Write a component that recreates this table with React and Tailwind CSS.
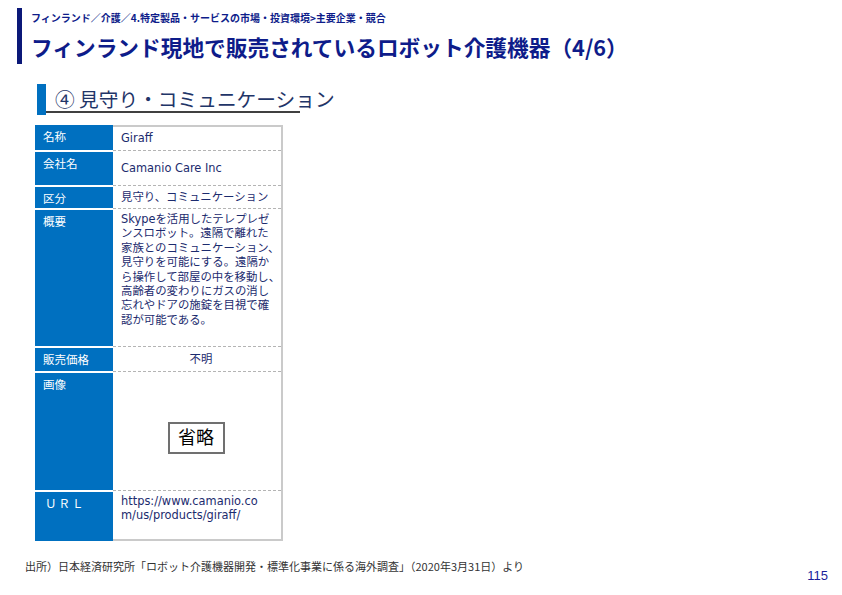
const font = { fontFamily: '"DejaVu Sans", "Noto Sans CJK JP", sans-serif' }

const rows = [
  { label: '名称', h: 'h-[25px]', value: 'Giraff', align: 'items-center' },
  { label: '会社名', h: 'h-[35px]', value: 'Camanio Care Inc', align: 'items-center' },
  { label: '区分', h: 'h-[23px]', value: '見守り、コミュニケーション', align: 'items-center' },
  {
    label: '概要',
    h: 'h-[138px]',
    lines: [
      'Skypeを活用したテレプレゼ',
      'ンスロボット。遠隔で離れた',
      '家族とのコミュニケーション、',
      '見守りを可能にする。遠隔か',
      'ら操作して部屋の中を移動し、',
      '高齢者の変わりにガスの消し',
      '忘れやドアの施錠を目視で確',
      '認が可能である。',
    ],
    align: 'items-start pt-[3px]',
  },
  { label: '販売価格', h: 'h-[25px]', value: '不明', align: 'items-center justify-center' },
  { label: '画像', h: 'h-[119px]', image: true },
  { label: 'ＵＲＬ', h: 'h-[51px]', lines: ['https://www.camanio.co', 'm/us/products/giraff/'], align: 'items-start pt-[3px]' },
]

export default function App() {
  return (
    <div
      className="relative w-[842px] h-[595px] bg-white overflow-hidden"
      style={{ fontFamily: '"Noto Sans CJK JP", "Noto Sans", sans-serif' }}
    >
      {/* Header */}
      <div className="flex pt-[8px] pl-[17px] gap-[9px]">
        <div className="w-[5px] h-[56px] bg-[#0b1878]" />
        <div>
          <p className="mt-[3px] text-[10px] leading-[14px] font-bold text-[#0e1c8a] whitespace-nowrap">
            フィンランド／介護／4.特定製品・サービスの市場・投資環境&gt;主要企業・競合
          </p>
          <h1 className="mt-[9px] text-[21.7px] leading-[26px] font-bold text-[#0e1c8a] whitespace-nowrap">
            フィンランド現地で販売されているロボット介護機器（4/6）
          </h1>
        </div>
      </div>

      {/* Section heading */}
      <div className="flex mt-[20px] ml-[37px]">
        <div className="w-[9px] h-[31px] bg-[#0070c0]" />
        <div className="w-[254px] h-[29px] border-b-2 border-[#404040] pl-[9px]">
          <span className="text-[19.7px] leading-[29px] text-[#1f3568] whitespace-nowrap">④ 見守り・コミュニケーション</span>
        </div>
      </div>

      {/* Table */}
      <div className="mt-[10px] ml-[35px] w-[248px]">
        {rows.map((row, i) => (
          <div key={row.label} className={`flex ${row.h}`}>
            <div
              className={`w-[78px] shrink-0 bg-[#0070c0] text-white text-[11.5px] leading-[14px] pl-[8px] pt-[4px] ${
                i > 0 ? 'border-t-2 border-white' : ''
              }`}
            >
              {row.label === 'ＵＲＬ' ? <span className="tracking-[2px] pl-[2px]">ＵＲＬ</span> : row.label}
            </div>
            <div
              className={`w-[170px] shrink-0 border-r-2 border-r-[#cacaca] ${
                i === 0 ? 'border-t-2 border-t-[#cacaca]' : ''
              } ${i === rows.length - 1 ? 'border-b-2 border-b-[#cacaca]' : ''}`}
            >
              <div
                className={`h-full flex ${row.align || ''} pl-[8px] ${
                  i > 0 ? 'border-t border-dashed border-[#b4b4b4]' : ''
                } text-[#1c2b6e] text-[11.4px] leading-[14.4px]`}
                style={font}
              >
                {row.image ? (
                  <div className="flex-1 h-full flex items-center justify-center pr-[10px]">
                    <div className="mt-[14px] w-[57px] h-[32px] border-2 border-[#707070] flex items-center justify-center text-[18px] text-black leading-none">
                      省略
                    </div>
                  </div>
                ) : row.lines ? (
                  <div className="whitespace-nowrap">
                    {row.lines.map((l) => (
                      <div key={l}>{l}</div>
                    ))}
                  </div>
                ) : (
                  <span className="whitespace-nowrap">{row.value}</span>
                )}
              </div>
            </div>
          </div>
        ))}
      </div>

      {/* Footer */}
      <div className="flex justify-between items-start pl-[25px] pr-[14px] mt-[18px]">
        <p className="text-[11px] leading-[14px] text-[#333333] whitespace-nowrap">
          出所）日本経済研究所「ロボット介護機器開発・標準化事業に係る海外調査」（2020年3月31日）より
        </p>
        <p
          className="mt-[9px] text-[13px] leading-[16px] text-[#1a1f9a]"
          style={{ fontFamily: '"Liberation Sans", sans-serif' }}
        >
          115
        </p>
      </div>
    </div>
  )
}
